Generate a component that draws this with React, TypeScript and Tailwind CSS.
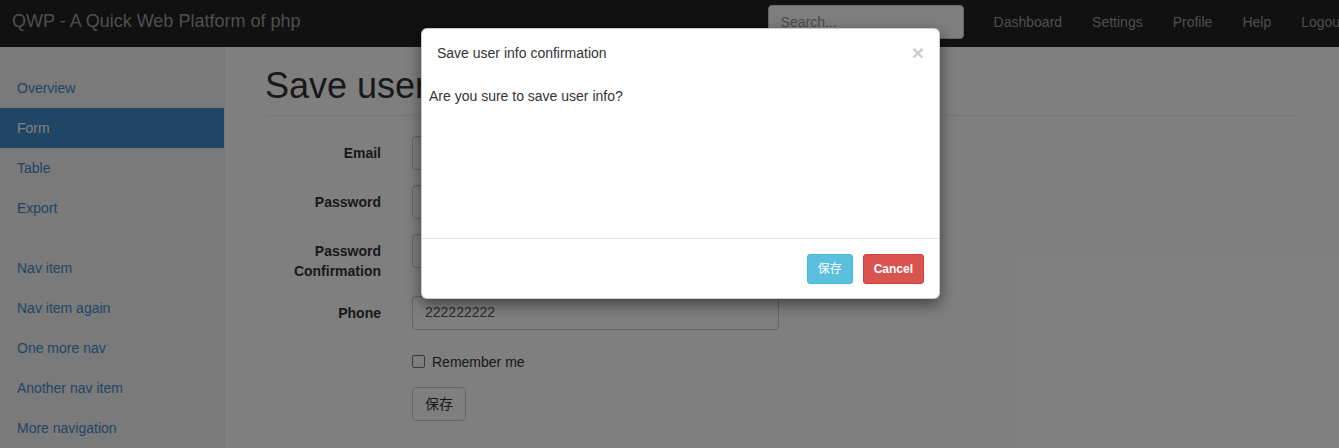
const sideTop = ["Overview", "Form", "Table", "Export"];
const sideBottom = ["Nav item", "Nav item again", "One more nav", "Another nav item", "More navigation"];
const topLinks = ["Dashboard", "Settings", "Profile", "Help", "Logout"];

const FormRow = ({ label, value }: { label: string; value?: string }) => (
  <div className="mb-[15px] flex">
    <label className="w-[131px] shrink-0 pr-[15px] pt-[7px] text-right font-bold leading-5">{label}</label>
    <div className="pl-[16px]">
      <div className="flex h-[34px] w-[367px] items-center rounded-[4px] border border-[#ccc] bg-white px-[12px] text-[#555] shadow-[inset_0_1px_1px_rgba(0,0,0,0.075)]">
        {value}
      </div>
    </div>
  </div>
);

const App = () => {
  return (
    <div className="relative h-[448px] w-[1339px] overflow-hidden bg-white font-['Liberation_Sans','Noto_Sans_CJK_SC',sans-serif] text-[14px] text-[#333]">
      {/* navbar */}
      <header className="h-[47px] overflow-hidden bg-[#222]">
        <div className="flex w-[1359px] items-start">
          <a className="pl-[12px] pt-[11px] text-[18px] leading-5 text-[#9d9d9d]">QWP - A Quick Web Platform of php</a>
          <div className="ml-auto mr-[15px] mt-[5px] flex h-[34px] w-[196px] items-center rounded-[4px] border border-[#ccc] bg-white px-[12px] text-[#999]">
            Search...
          </div>
          <ul className="flex">
            {topLinks.map((l) => (
              <li key={l} className="px-[15px] pt-[12px] leading-5 text-[#9d9d9d]">
                {l}
              </li>
            ))}
          </ul>
        </div>
      </header>

      <div className="flex h-[401px]">
        {/* sidebar */}
        <aside className="w-[225px] shrink-0 border-r border-[#eee] bg-[#f5f5f5] pt-[21px]">
          <ul className="mb-[20px]">
            {sideTop.map((l) => (
              <li
                key={l}
                className={
                  l === "Form"
                    ? "h-[40px] bg-[#428bca] pl-[17px] pt-[10px] leading-5 text-white"
                    : "h-[40px] pl-[17px] pt-[10px] leading-5 text-[#428bca]"
                }
              >
                {l}
              </li>
            ))}
          </ul>
          <ul>
            {sideBottom.map((l) => (
              <li key={l} className="h-[40px] pl-[17px] pt-[10px] leading-5 text-[#428bca]">
                {l}
              </li>
            ))}
          </ul>
        </aside>

        {/* main */}
        <main className="flex-1 px-[40px] pt-[19px]">
          <h1 className="mb-[20px] border-b border-[#eee] pb-[9px] text-[36px] font-medium leading-[39.6px]">
            Save user info
          </h1>
          <FormRow label="Email" />
          <FormRow label="Password" />
          <FormRow label="Password Confirmation" />
          <FormRow label="Phone" value="222222222" />
          <div className="pl-[147px]">
            <div className="mb-[15px] flex min-h-[27px] items-center pt-[7px] leading-5">
              <span className="mr-[7px] h-[13px] w-[13px] rounded-[2px] border border-[#767676] bg-white" />
              Remember me
            </div>
            <button className="h-[34px] rounded-[4px] border border-[#ccc] bg-white px-[12px] leading-5 text-[#333]">
              保存
            </button>
          </div>
        </main>
      </div>

      {/* backdrop */}
      <div className="absolute inset-0 bg-black/50" />

      {/* modal */}
      <div className="absolute left-[421px] top-[28px] w-[519px] rounded-[6px] border border-black/20 bg-white shadow-[0_5px_15px_rgba(0,0,0,0.5)]">
        <div className="flex items-center justify-between px-[15px] pb-[15px] pt-[14px]">
          <h4 className="leading-5">Save user info confirmation</h4>
          <span className="-mt-[1px] text-[21px] font-bold leading-none text-black opacity-20">×</span>
        </div>
        <div className="h-[160px] px-[7px] py-[8px] leading-5">Are you sure to save user info?</div>
        <div className="flex justify-end gap-[10px] border-t border-[#e5e5e5] px-[15px] pb-[14px] pt-[15px]">
          <button className="h-[30px] rounded-[3px] border border-[#46b8da] bg-[#5bc0de] px-[10px] text-[12px] text-white">
            保存
          </button>
          <button className="h-[30px] rounded-[3px] border border-[#d43f3a] bg-[#d9534f] px-[10px] text-[12px] font-bold text-white">
            Cancel
          </button>
        </div>
      </div>
    </div>
  );
};

export default App;
